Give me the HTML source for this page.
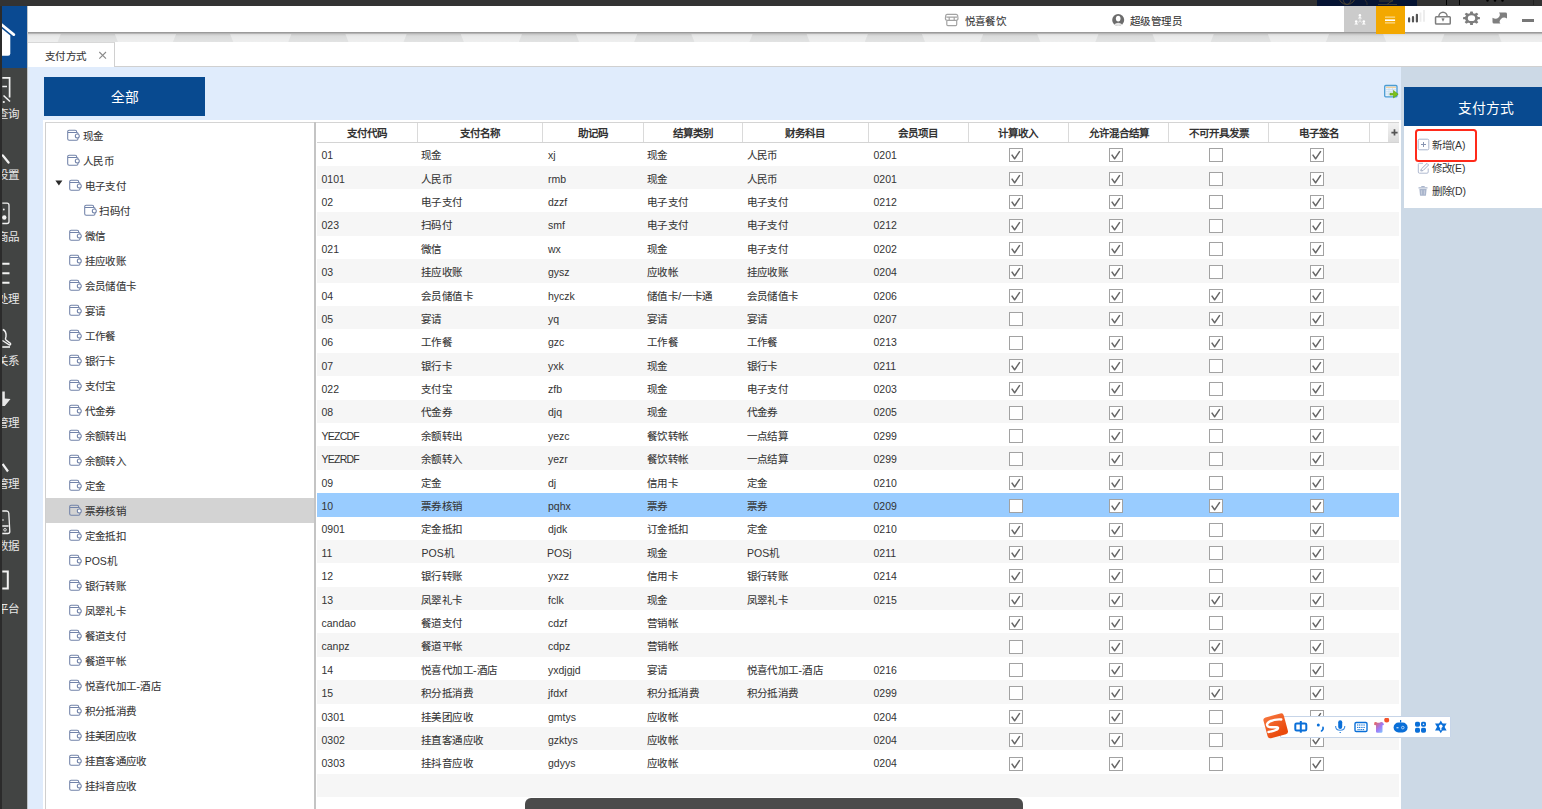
<!DOCTYPE html>
<html lang="zh-CN"><head><meta charset="utf-8"><title>支付方式</title>
<style>
*{margin:0;padding:0;box-sizing:border-box}
html,body{width:1542px;height:809px;overflow:hidden;background:#e0ecfc;font-family:"Liberation Sans",sans-serif;color:#333}
.abs{position:absolute}
.t{position:absolute;font-size:10.5px;line-height:14px;white-space:nowrap}
.z{letter-spacing:0.4px;-webkit-text-stroke:0.1px #444}
.wi{position:absolute}
.cb{position:absolute;width:14px;height:14px;border:1px solid #a2a2a2;background:#fff}
.cb svg{position:absolute;left:-1px;top:-1px}
.row{position:absolute;left:317px;width:1082px}
.hd{position:absolute;font-size:10.5px;font-weight:bold;white-space:nowrap;line-height:14px;text-align:center;color:#333}
.vsep{position:absolute;top:122.5px;width:1px;height:19.5px;background:#dadada}
.sl{position:absolute;font-size:11.5px;line-height:14px;color:#e8e8e8;white-space:nowrap}
</style></head><body>

<div class="abs" style="left:0;top:0;width:1542px;height:6px;background:#333"></div>
<div class="abs" style="left:1317px;top:0;width:100px;height:5.5px;background:#061433"></div>
<svg class="abs" style="left:1317px;top:0" width="100" height="6"><circle cx="30" cy="-4" r="8.5" fill="none" stroke="#4f4630" stroke-width="0.9"/><path d="M26 0 Q27 4.5 30 4.5 Q33 4.5 34 0" fill="none" stroke="#4f4630" stroke-width="0.8"/><path d="M48 0 Q51 3 50 5" fill="none" stroke="#3e3a2e" stroke-width="0.8"/><path d="M61 4.5 H80 M70 4.5 L76 0 M62 1 H76" fill="none" stroke="#4f4630" stroke-width="0.8"/></svg>
<div class="abs" style="left:1445.5px;top:0;width:1px;height:5px;background:#000"></div>
<div class="abs" style="left:1459px;top:0;width:1px;height:5px;background:#000"></div>
<div class="abs" style="left:1532.5px;top:0;width:1px;height:5px;background:#222"></div>
<svg class="abs" style="left:1484px;top:0" width="22" height="4"><circle cx="3.5" cy="0.5" r="1.2" fill="#000"/><circle cx="11" cy="0.5" r="1.2" fill="#000"/><circle cx="18.5" cy="0.5" r="1.2" fill="#000"/></svg>
<div class="abs" style="left:0;top:5.5px;width:28px;height:804px;background:#424443"></div>
<div class="abs" style="left:0;top:5.5px;width:1.7px;height:804px;background:#2b2b2b"></div>
<div class="abs" style="left:1.7px;top:6px;width:25.6px;height:62.2px;background:#0a4a92"></div>
<div class="abs" style="left:27.3px;top:5.5px;width:1px;height:804px;background:#bfc4c8"></div>
<svg class="abs" style="left:1.7px;top:5px" width="26" height="64"><path d="M-3 17.5 L11.8 29.6" stroke="#fff" stroke-width="2.7" stroke-linecap="round"/><path d="M0 23.8 L8.3 30.6 V48.5 Q8.3 50.7 6.1 50.7 H0 Z" fill="#fff"/></svg>
<div class="abs" style="left:1.7px;top:104.5px;width:25.6px;height:18px;overflow:hidden"><span class="sl" style="left:-4.4px;top:2.3px">查询</span></div>
<div class="abs" style="left:1.7px;top:165.8px;width:25.6px;height:18px;overflow:hidden"><span class="sl" style="left:-4.4px;top:2.3px">设置</span></div>
<div class="abs" style="left:1.7px;top:227.5px;width:25.6px;height:18px;overflow:hidden"><span class="sl" style="left:-4.4px;top:2.3px">商品</span></div>
<div class="abs" style="left:1.7px;top:290px;width:25.6px;height:18px;overflow:hidden"><span class="sl" style="left:-4.4px;top:2.3px">处理</span></div>
<div class="abs" style="left:1.7px;top:351.5px;width:25.6px;height:18px;overflow:hidden"><span class="sl" style="left:-4.4px;top:2.3px">关系</span></div>
<div class="abs" style="left:1.7px;top:413.4px;width:25.6px;height:18px;overflow:hidden"><span class="sl" style="left:-4.4px;top:2.3px">管理</span></div>
<div class="abs" style="left:1.7px;top:475px;width:25.6px;height:18px;overflow:hidden"><span class="sl" style="left:-4.4px;top:2.3px">管理</span></div>
<div class="abs" style="left:1.7px;top:536.7px;width:25.6px;height:18px;overflow:hidden"><span class="sl" style="left:-4.4px;top:2.3px">数据</span></div>
<div class="abs" style="left:1.7px;top:599.5px;width:25.6px;height:18px;overflow:hidden"><span class="sl" style="left:-4.4px;top:2.3px">平台</span></div>
<svg class="abs" style="left:1.7px;top:70px" width="25" height="560" viewBox="0 0 25 560"><path d="M0.3 7.8 H7.6 V27.5 M0.3 16.5 H5" fill="none" stroke="#f2f2f2" stroke-width="1.7"/><path d="M1.5 25.5 L8 31.5" stroke="#f2f2f2" stroke-width="1.6"/><circle cx="1.8" cy="32" r="1.1" fill="#f2f2f2"/><path d="M0.8 85.5 L6.5 92.5" stroke="#f2f2f2" stroke-width="2.3" stroke-linecap="round"/><path d="M0.3 133.2 H5 Q7 133.2 7 135.2 V151.5 Q7 153.5 5 153.5 H0.3" fill="none" stroke="#f2f2f2" stroke-width="1.3"/><circle cx="2.3" cy="147.5" r="2.2" fill="#f2f2f2"/><circle cx="1.8" cy="139.5" r="0.9" fill="#f2f2f2"/><path d="M0.3 193.7 H7.5 M0.3 203.3 H7.5 M0.3 212.8 H7.5" stroke="#f2f2f2" stroke-width="2.1"/><path d="M0.8 259.5 Q4.5 261 4 266.5 Q3 269 4 270 L8.5 273.5 Q9 275 7.5 275 L0.5 270.5" fill="none" stroke="#f2f2f2" stroke-width="1.4"/><path d="M0.3 277 H8" stroke="#f2f2f2" stroke-width="1.6"/><path d="M0.3 321.5 H2.8 V328.5 L8.5 329 L2.8 336 H0.3 Z" fill="#e8e8e8"/><path d="M0.6 394 L6 401.5" stroke="#f2f2f2" stroke-width="2.2"/><path d="M0.3 441 H4.5 Q6.5 441 6.8 443 L7.8 461.5 Q7.8 463.5 5.8 463.5 H0.3 M0.3 456 H6.5" fill="none" stroke="#f2f2f2" stroke-width="1.3"/><circle cx="3" cy="459.8" r="1.3" fill="none" stroke="#f2f2f2" stroke-width="0.9"/><circle cx="1" cy="450" r="0.8" fill="#f2f2f2"/><path d="M0.3 501.4 H5.8 V518.5 H0.3" fill="none" stroke="#f2f2f2" stroke-width="2"/></svg>
<div class="abs" style="left:28px;top:5.5px;width:1514px;height:26.5px;background:#fff"></div>
<div class="abs" style="left:28px;top:32px;width:1514px;height:10px;background:linear-gradient(#8e8e8e 0,#a8a8a8 1px,#cfcfcf 2.5px,#e0e1e1 4px,#e8e9e9 10px)"></div>
<svg class="abs" style="left:28px;top:33.5px" width="1514" height="8.5" viewBox="28 0 1514 8.5"><path d="M-54.5 0 H-0.5 L3.5 10 H-58.5 Z" fill="rgba(0,0,0,0.025)"/><path d="M-0.5 0 H60.8 L56.8 10 H3.5 Z" fill="rgba(255,255,255,0.28)"/><path d="M60.8 0 H114.8 L118.8 10 H56.8 Z" fill="rgba(0,0,0,0.025)"/><path d="M114.8 0 H176.1 L172.1 10 H118.8 Z" fill="rgba(255,255,255,0.28)"/><path d="M176.1 0 H230.1 L234.1 10 H172.1 Z" fill="rgba(0,0,0,0.025)"/><path d="M230.1 0 H291.4 L287.4 10 H234.1 Z" fill="rgba(255,255,255,0.28)"/><path d="M291.4 0 H345.4 L349.4 10 H287.4 Z" fill="rgba(0,0,0,0.025)"/><path d="M345.4 0 H406.7 L402.7 10 H349.4 Z" fill="rgba(255,255,255,0.28)"/><path d="M406.7 0 H460.7 L464.7 10 H402.7 Z" fill="rgba(0,0,0,0.025)"/><path d="M460.7 0 H522.0 L518.0 10 H464.7 Z" fill="rgba(255,255,255,0.28)"/><path d="M522.0 0 H576.0 L580.0 10 H518.0 Z" fill="rgba(0,0,0,0.025)"/><path d="M576.0 0 H637.3 L633.3 10 H580.0 Z" fill="rgba(255,255,255,0.28)"/><path d="M637.3 0 H691.3 L695.3 10 H633.3 Z" fill="rgba(0,0,0,0.025)"/><path d="M691.3 0 H752.6 L748.6 10 H695.3 Z" fill="rgba(255,255,255,0.28)"/><path d="M752.6 0 H806.6 L810.6 10 H748.6 Z" fill="rgba(0,0,0,0.025)"/><path d="M806.6 0 H867.9 L863.9 10 H810.6 Z" fill="rgba(255,255,255,0.28)"/><path d="M867.9 0 H921.9 L925.9 10 H863.9 Z" fill="rgba(0,0,0,0.025)"/><path d="M921.9 0 H983.2 L979.2 10 H925.9 Z" fill="rgba(255,255,255,0.28)"/><path d="M983.2 0 H1037.2 L1041.2 10 H979.2 Z" fill="rgba(0,0,0,0.025)"/><path d="M1037.2 0 H1098.5 L1094.5 10 H1041.2 Z" fill="rgba(255,255,255,0.28)"/><path d="M1098.5 0 H1152.5 L1156.5 10 H1094.5 Z" fill="rgba(0,0,0,0.025)"/><path d="M1152.5 0 H1213.8 L1209.8 10 H1156.5 Z" fill="rgba(255,255,255,0.28)"/><path d="M1213.8 0 H1267.8 L1271.8 10 H1209.8 Z" fill="rgba(0,0,0,0.025)"/><path d="M1267.8 0 H1329.1 L1325.1 10 H1271.8 Z" fill="rgba(255,255,255,0.28)"/><path d="M1329.1 0 H1383.1 L1387.1 10 H1325.1 Z" fill="rgba(0,0,0,0.025)"/><path d="M1383.1 0 H1444.4 L1440.4 10 H1387.1 Z" fill="rgba(255,255,255,0.28)"/><path d="M1444.4 0 H1498.4 L1502.4 10 H1440.4 Z" fill="rgba(0,0,0,0.025)"/><path d="M1498.4 0 H1559.7 L1555.7 10 H1502.4 Z" fill="rgba(255,255,255,0.28)"/><path d="M1559.7 0 H1613.7 L1617.7 10 H1555.7 Z" fill="rgba(0,0,0,0.025)"/><path d="M1613.7 0 H1675.0 L1671.0 10 H1617.7 Z" fill="rgba(255,255,255,0.28)"/></svg>
<svg class="abs" style="left:944px;top:12px" width="16" height="16" viewBox="0 0 16 16"><path d="M3 2.3 H12.2 Q13.3 2.3 13.6 3.4 L14 6.2 Q14 8.3 12 8.3 H3.2 Q1.4 8.3 1.4 6.2 L1.8 3.4 Q2 2.3 3 2.3 Z M2.4 5.2 H13 M5.2 5.2 V8.3 M10.2 5.2 V8.3 M2.8 8.3 V12.6 Q2.8 13.7 3.9 13.7 H11.6 Q12.7 13.7 12.7 12.6 V8.3" fill="none" stroke="#a3a3a3" stroke-width="1.2"/></svg>
<span class="t z" style="left:964.5px;top:14px">悦喜餐饮</span>
<svg class="abs" style="left:1111px;top:13px" width="14" height="14" viewBox="0 0 14 14"><circle cx="7.2" cy="6.9" r="6" fill="#6c6c6c"/><ellipse cx="7.2" cy="5.6" rx="2.3" ry="2.9" fill="#fff"/><path d="M3 11.4 Q7.2 8.2 11.4 11.4 Q7.2 14.5 3 11.4 Z" fill="#e6e6e6"/></svg>
<span class="t z" style="left:1130px;top:14px">超级管理员</span>
<div class="abs" style="left:1344.4px;top:5.5px;width:31.8px;height:26.5px;background:#cbcbcb"></div>
<svg class="abs" style="left:1344.4px;top:5.5px" width="32" height="27"><g fill="#fff"><circle cx="15.9" cy="9.4" r="1.3"/><path d="M14 12.4 Q14.3 10.9 15.9 10.9 Q17.5 10.9 17.8 12.4 Z"/><circle cx="12.2" cy="15.6" r="1.3"/><path d="M10.3 18.6 Q10.6 17.1 12.2 17.1 Q13.8 17.1 14.1 18.6 Z"/><circle cx="19.8" cy="15.6" r="1.3"/><path d="M17.9 18.6 Q18.2 17.1 19.8 17.1 Q21.4 17.1 21.7 18.6 Z"/></g><path d="M16 12.7 V15 L14 16.5 M16 15 L18 16.5" stroke="#fff" stroke-width="0.7" fill="none" opacity="0.8"/></svg>
<div class="abs" style="left:1376.2px;top:5.5px;width:28.4px;height:28.3px;background:#f3a800"></div>
<svg class="abs" style="left:1376.2px;top:5.5px" width="29" height="28"><path d="M9 11.2 H19.1 M9 16.8 H19.1" stroke="#fbd98a" stroke-width="1.3"/><path d="M9 14.2 H19.1" stroke="#fff" stroke-width="1.7"/></svg>
<svg class="abs" style="left:1405px;top:8px" width="22" height="16"><path d="M4.1 10.4 V13.5 M8 9.1 V13.5 M11.9 6.8 V13.5" stroke="#555" stroke-width="2.2" stroke-linecap="round"/><path d="M15.5 4.5 V13.7 M19 1.9 V13.7" stroke="#ececec" stroke-width="1.8"/></svg>
<svg class="abs" style="left:1433px;top:10px" width="20" height="17" viewBox="0 0 20 17"><rect x="2.55" y="6.75" width="14.7" height="7.3" rx="0.8" fill="none" stroke="#7d7d7d" stroke-width="1.5"/><path d="M5.8 6.75 A4.2 4.5 0 0 1 14.2 6.75" fill="none" stroke="#7d7d7d" stroke-width="1.5"/><path d="M8.4 8.6 Q10 8 11.6 8.6 L10 11.8 Z" fill="#7d7d7d"/></svg>
<svg class="abs" style="left:1461px;top:10px" width="21" height="16" viewBox="0 0 21 16"><g transform="translate(10.5,8.15) scale(1.25,1)"><circle r="4.1" fill="none" stroke="#7d7d7d" stroke-width="2.3"/><rect x="-1.15" y="-6.75" width="2.3" height="3" rx="0.5" fill="#7d7d7d" transform="rotate(0)"/><rect x="-1.15" y="-6.75" width="2.3" height="3" rx="0.5" fill="#7d7d7d" transform="rotate(45)"/><rect x="-1.15" y="-6.75" width="2.3" height="3" rx="0.5" fill="#7d7d7d" transform="rotate(90)"/><rect x="-1.15" y="-6.75" width="2.3" height="3" rx="0.5" fill="#7d7d7d" transform="rotate(135)"/><rect x="-1.15" y="-6.75" width="2.3" height="3" rx="0.5" fill="#7d7d7d" transform="rotate(180)"/><rect x="-1.15" y="-6.75" width="2.3" height="3" rx="0.5" fill="#7d7d7d" transform="rotate(225)"/><rect x="-1.15" y="-6.75" width="2.3" height="3" rx="0.5" fill="#7d7d7d" transform="rotate(270)"/><rect x="-1.15" y="-6.75" width="2.3" height="3" rx="0.5" fill="#7d7d7d" transform="rotate(315)"/></g></svg>
<svg class="abs" style="left:1490px;top:10px" width="20" height="16" viewBox="0 0 20 16"><path d="M9 2.55 H15.5 Q17 2.55 17 4 V8.5 Q13.5 6.5 11 9 Q8.5 11.5 10.4 13.6 H4 Q2.5 13.6 2.5 12.1 V7.8 Q6 10 8.5 7.5 Q11 5 9 2.55 Z" fill="#7f7f7f"/></svg>
<div class="abs" style="left:1522px;top:19px;width:12.3px;height:3px;background:#777"></div>
<div class="abs" style="left:28px;top:41.5px;width:1514px;height:25.5px;background:#fff;border-bottom:1px solid #d0d0d0"></div>
<div class="abs" style="left:28px;top:42.2px;width:87px;height:25px;background:#fff;border-top:1px solid #d8d8d8;border-right:1px solid #d0d0d0"></div>
<span class="t z" style="left:44.8px;top:49.3px">支付方式</span>
<svg class="abs" style="left:98px;top:51px" width="10" height="9"><path d="M1.3 1 L8 7.6 M8 1 L1.3 7.6" stroke="#8a8a8a" stroke-width="1.1"/></svg>
<div class="abs" style="left:44px;top:77px;width:161px;height:39px;background:#084a90"></div>
<span class="t" style="left:110.5px;top:90px;font-size:13.8px;color:#fff;line-height:16px">全部</span>
<svg class="abs" style="left:1383px;top:84px" width="17" height="15" viewBox="0 0 17 15"><rect x="1.7" y="1.5" width="12.3" height="11.3" rx="1" fill="#eaf2fa" stroke="#4a9cd3" stroke-width="1.3"/><path d="M3 3.3 H13" stroke="#f3c47a" stroke-width="0.9"/><path d="M3 5.5 H13 M3 7.7 H9 M3 10 H9 M6 4 V12 M9.5 4 V8" stroke="#bcd6ee" stroke-width="0.6"/><path d="M7 9.3 L10.5 9.3 L10.5 6.5 L15.2 10.2 L10.5 13.9 L10.5 11.1 L7 11.1 Z" fill="#7cc219" stroke="#5aa010" stroke-width="0.6"/></svg>
<div class="abs" style="left:43.2px;top:120px;width:1358px;height:700px;background:#fff"></div>
<div class="abs" style="left:45.3px;top:121.9px;width:1.2px;height:700px;background:#cfcfcf"></div>
<div class="abs" style="left:45.3px;top:121.9px;width:1353.5px;height:1px;background:#d4d4d4"></div>
<div class="abs" style="left:314.3px;top:122px;width:2.2px;height:700px;background:#c4c4c4"></div>
<svg class="wi" style="left:64.40px;top:125.50px" width="20" height="18" viewBox="0 0 20 18"><path d="M3.7 6.45 V12.7 Q3.7 14.2 5.2 14.2 H12.5 Q14 14.2 14 12.7 V11.9 M14 7.9 V7.6 Q14 6.45 13 6.45 H3.7 V5.6 Q3.7 4.2 5.1 4.2 H11.2 Q12.6 4.2 12.6 5.6 V6.45" fill="none" stroke="#7283a9" stroke-width="1.05"/><circle cx="13.3" cy="9.9" r="2" fill="#fff" stroke="#7283a9" stroke-width="1.05"/></svg>
<span class="t z" style="left:83.1px;top:129.2px">现金</span>
<svg class="wi" style="left:64.40px;top:150.50px" width="20" height="18" viewBox="0 0 20 18"><path d="M3.7 6.45 V12.7 Q3.7 14.2 5.2 14.2 H12.5 Q14 14.2 14 12.7 V11.9 M14 7.9 V7.6 Q14 6.45 13 6.45 H3.7 V5.6 Q3.7 4.2 5.1 4.2 H11.2 Q12.6 4.2 12.6 5.6 V6.45" fill="none" stroke="#7283a9" stroke-width="1.05"/><circle cx="13.3" cy="9.9" r="2" fill="#fff" stroke="#7283a9" stroke-width="1.05"/></svg>
<span class="t z" style="left:83.1px;top:154.2px">人民币</span>
<svg class="wi" style="left:65.60px;top:175.50px" width="20" height="18" viewBox="0 0 20 18"><path d="M3.7 6.45 V12.7 Q3.7 14.2 5.2 14.2 H12.5 Q14 14.2 14 12.7 V11.9 M14 7.9 V7.6 Q14 6.45 13 6.45 H3.7 V5.6 Q3.7 4.2 5.1 4.2 H11.2 Q12.6 4.2 12.6 5.6 V6.45" fill="none" stroke="#7283a9" stroke-width="1.05"/><circle cx="13.3" cy="9.9" r="2" fill="#fff" stroke="#7283a9" stroke-width="1.05"/></svg>
<span class="t z" style="left:84.5px;top:179.2px">电子支付</span>
<svg class="wi" style="left:81.00px;top:200.50px" width="20" height="18" viewBox="0 0 20 18"><path d="M3.7 6.45 V12.7 Q3.7 14.2 5.2 14.2 H12.5 Q14 14.2 14 12.7 V11.9 M14 7.9 V7.6 Q14 6.45 13 6.45 H3.7 V5.6 Q3.7 4.2 5.1 4.2 H11.2 Q12.6 4.2 12.6 5.6 V6.45" fill="none" stroke="#7283a9" stroke-width="1.05"/><circle cx="13.3" cy="9.9" r="2" fill="#fff" stroke="#7283a9" stroke-width="1.05"/></svg>
<span class="t z" style="left:99.39999999999999px;top:204.2px">扫码付</span>
<svg class="wi" style="left:65.60px;top:225.50px" width="20" height="18" viewBox="0 0 20 18"><path d="M3.7 6.45 V12.7 Q3.7 14.2 5.2 14.2 H12.5 Q14 14.2 14 12.7 V11.9 M14 7.9 V7.6 Q14 6.45 13 6.45 H3.7 V5.6 Q3.7 4.2 5.1 4.2 H11.2 Q12.6 4.2 12.6 5.6 V6.45" fill="none" stroke="#7283a9" stroke-width="1.05"/><circle cx="13.3" cy="9.9" r="2" fill="#fff" stroke="#7283a9" stroke-width="1.05"/></svg>
<span class="t z" style="left:84.5px;top:229.2px">微信</span>
<svg class="wi" style="left:65.60px;top:250.50px" width="20" height="18" viewBox="0 0 20 18"><path d="M3.7 6.45 V12.7 Q3.7 14.2 5.2 14.2 H12.5 Q14 14.2 14 12.7 V11.9 M14 7.9 V7.6 Q14 6.45 13 6.45 H3.7 V5.6 Q3.7 4.2 5.1 4.2 H11.2 Q12.6 4.2 12.6 5.6 V6.45" fill="none" stroke="#7283a9" stroke-width="1.05"/><circle cx="13.3" cy="9.9" r="2" fill="#fff" stroke="#7283a9" stroke-width="1.05"/></svg>
<span class="t z" style="left:84.5px;top:254.2px">挂应收账</span>
<svg class="wi" style="left:65.60px;top:275.50px" width="20" height="18" viewBox="0 0 20 18"><path d="M3.7 6.45 V12.7 Q3.7 14.2 5.2 14.2 H12.5 Q14 14.2 14 12.7 V11.9 M14 7.9 V7.6 Q14 6.45 13 6.45 H3.7 V5.6 Q3.7 4.2 5.1 4.2 H11.2 Q12.6 4.2 12.6 5.6 V6.45" fill="none" stroke="#7283a9" stroke-width="1.05"/><circle cx="13.3" cy="9.9" r="2" fill="#fff" stroke="#7283a9" stroke-width="1.05"/></svg>
<span class="t z" style="left:84.5px;top:279.2px">会员储值卡</span>
<svg class="wi" style="left:65.60px;top:300.50px" width="20" height="18" viewBox="0 0 20 18"><path d="M3.7 6.45 V12.7 Q3.7 14.2 5.2 14.2 H12.5 Q14 14.2 14 12.7 V11.9 M14 7.9 V7.6 Q14 6.45 13 6.45 H3.7 V5.6 Q3.7 4.2 5.1 4.2 H11.2 Q12.6 4.2 12.6 5.6 V6.45" fill="none" stroke="#7283a9" stroke-width="1.05"/><circle cx="13.3" cy="9.9" r="2" fill="#fff" stroke="#7283a9" stroke-width="1.05"/></svg>
<span class="t z" style="left:84.5px;top:304.2px">宴请</span>
<svg class="wi" style="left:65.60px;top:325.50px" width="20" height="18" viewBox="0 0 20 18"><path d="M3.7 6.45 V12.7 Q3.7 14.2 5.2 14.2 H12.5 Q14 14.2 14 12.7 V11.9 M14 7.9 V7.6 Q14 6.45 13 6.45 H3.7 V5.6 Q3.7 4.2 5.1 4.2 H11.2 Q12.6 4.2 12.6 5.6 V6.45" fill="none" stroke="#7283a9" stroke-width="1.05"/><circle cx="13.3" cy="9.9" r="2" fill="#fff" stroke="#7283a9" stroke-width="1.05"/></svg>
<span class="t z" style="left:84.5px;top:329.2px">工作餐</span>
<svg class="wi" style="left:65.60px;top:350.50px" width="20" height="18" viewBox="0 0 20 18"><path d="M3.7 6.45 V12.7 Q3.7 14.2 5.2 14.2 H12.5 Q14 14.2 14 12.7 V11.9 M14 7.9 V7.6 Q14 6.45 13 6.45 H3.7 V5.6 Q3.7 4.2 5.1 4.2 H11.2 Q12.6 4.2 12.6 5.6 V6.45" fill="none" stroke="#7283a9" stroke-width="1.05"/><circle cx="13.3" cy="9.9" r="2" fill="#fff" stroke="#7283a9" stroke-width="1.05"/></svg>
<span class="t z" style="left:84.5px;top:354.2px">银行卡</span>
<svg class="wi" style="left:65.60px;top:375.50px" width="20" height="18" viewBox="0 0 20 18"><path d="M3.7 6.45 V12.7 Q3.7 14.2 5.2 14.2 H12.5 Q14 14.2 14 12.7 V11.9 M14 7.9 V7.6 Q14 6.45 13 6.45 H3.7 V5.6 Q3.7 4.2 5.1 4.2 H11.2 Q12.6 4.2 12.6 5.6 V6.45" fill="none" stroke="#7283a9" stroke-width="1.05"/><circle cx="13.3" cy="9.9" r="2" fill="#fff" stroke="#7283a9" stroke-width="1.05"/></svg>
<span class="t z" style="left:84.5px;top:379.2px">支付宝</span>
<svg class="wi" style="left:65.60px;top:400.50px" width="20" height="18" viewBox="0 0 20 18"><path d="M3.7 6.45 V12.7 Q3.7 14.2 5.2 14.2 H12.5 Q14 14.2 14 12.7 V11.9 M14 7.9 V7.6 Q14 6.45 13 6.45 H3.7 V5.6 Q3.7 4.2 5.1 4.2 H11.2 Q12.6 4.2 12.6 5.6 V6.45" fill="none" stroke="#7283a9" stroke-width="1.05"/><circle cx="13.3" cy="9.9" r="2" fill="#fff" stroke="#7283a9" stroke-width="1.05"/></svg>
<span class="t z" style="left:84.5px;top:404.2px">代金券</span>
<svg class="wi" style="left:65.60px;top:425.50px" width="20" height="18" viewBox="0 0 20 18"><path d="M3.7 6.45 V12.7 Q3.7 14.2 5.2 14.2 H12.5 Q14 14.2 14 12.7 V11.9 M14 7.9 V7.6 Q14 6.45 13 6.45 H3.7 V5.6 Q3.7 4.2 5.1 4.2 H11.2 Q12.6 4.2 12.6 5.6 V6.45" fill="none" stroke="#7283a9" stroke-width="1.05"/><circle cx="13.3" cy="9.9" r="2" fill="#fff" stroke="#7283a9" stroke-width="1.05"/></svg>
<span class="t z" style="left:84.5px;top:429.2px">余额转出</span>
<svg class="wi" style="left:65.60px;top:450.50px" width="20" height="18" viewBox="0 0 20 18"><path d="M3.7 6.45 V12.7 Q3.7 14.2 5.2 14.2 H12.5 Q14 14.2 14 12.7 V11.9 M14 7.9 V7.6 Q14 6.45 13 6.45 H3.7 V5.6 Q3.7 4.2 5.1 4.2 H11.2 Q12.6 4.2 12.6 5.6 V6.45" fill="none" stroke="#7283a9" stroke-width="1.05"/><circle cx="13.3" cy="9.9" r="2" fill="#fff" stroke="#7283a9" stroke-width="1.05"/></svg>
<span class="t z" style="left:84.5px;top:454.2px">余额转入</span>
<svg class="wi" style="left:65.60px;top:475.50px" width="20" height="18" viewBox="0 0 20 18"><path d="M3.7 6.45 V12.7 Q3.7 14.2 5.2 14.2 H12.5 Q14 14.2 14 12.7 V11.9 M14 7.9 V7.6 Q14 6.45 13 6.45 H3.7 V5.6 Q3.7 4.2 5.1 4.2 H11.2 Q12.6 4.2 12.6 5.6 V6.45" fill="none" stroke="#7283a9" stroke-width="1.05"/><circle cx="13.3" cy="9.9" r="2" fill="#fff" stroke="#7283a9" stroke-width="1.05"/></svg>
<span class="t z" style="left:84.5px;top:479.2px">定金</span>
<div class="abs" style="left:46px;top:498.1px;width:267.9px;height:24.8px;background:#d3d3d3"></div>
<svg class="wi" style="left:65.60px;top:500.50px" width="20" height="18" viewBox="0 0 20 18"><path d="M3.7 6.45 V12.7 Q3.7 14.2 5.2 14.2 H12.5 Q14 14.2 14 12.7 V11.9 M14 7.9 V7.6 Q14 6.45 13 6.45 H3.7 V5.6 Q3.7 4.2 5.1 4.2 H11.2 Q12.6 4.2 12.6 5.6 V6.45" fill="none" stroke="#7283a9" stroke-width="1.05"/><circle cx="13.3" cy="9.9" r="2" fill="#fff" stroke="#7283a9" stroke-width="1.05"/></svg>
<span class="t z" style="left:84.5px;top:504.2px">票券核销</span>
<svg class="wi" style="left:65.60px;top:525.50px" width="20" height="18" viewBox="0 0 20 18"><path d="M3.7 6.45 V12.7 Q3.7 14.2 5.2 14.2 H12.5 Q14 14.2 14 12.7 V11.9 M14 7.9 V7.6 Q14 6.45 13 6.45 H3.7 V5.6 Q3.7 4.2 5.1 4.2 H11.2 Q12.6 4.2 12.6 5.6 V6.45" fill="none" stroke="#7283a9" stroke-width="1.05"/><circle cx="13.3" cy="9.9" r="2" fill="#fff" stroke="#7283a9" stroke-width="1.05"/></svg>
<span class="t z" style="left:84.5px;top:529.2px">定金抵扣</span>
<svg class="wi" style="left:65.60px;top:550.50px" width="20" height="18" viewBox="0 0 20 18"><path d="M3.7 6.45 V12.7 Q3.7 14.2 5.2 14.2 H12.5 Q14 14.2 14 12.7 V11.9 M14 7.9 V7.6 Q14 6.45 13 6.45 H3.7 V5.6 Q3.7 4.2 5.1 4.2 H11.2 Q12.6 4.2 12.6 5.6 V6.45" fill="none" stroke="#7283a9" stroke-width="1.05"/><circle cx="13.3" cy="9.9" r="2" fill="#fff" stroke="#7283a9" stroke-width="1.05"/></svg>
<span class="t" style="left:84.7px;top:554.2px">POS机</span>
<svg class="wi" style="left:65.60px;top:575.50px" width="20" height="18" viewBox="0 0 20 18"><path d="M3.7 6.45 V12.7 Q3.7 14.2 5.2 14.2 H12.5 Q14 14.2 14 12.7 V11.9 M14 7.9 V7.6 Q14 6.45 13 6.45 H3.7 V5.6 Q3.7 4.2 5.1 4.2 H11.2 Q12.6 4.2 12.6 5.6 V6.45" fill="none" stroke="#7283a9" stroke-width="1.05"/><circle cx="13.3" cy="9.9" r="2" fill="#fff" stroke="#7283a9" stroke-width="1.05"/></svg>
<span class="t z" style="left:84.5px;top:579.2px">银行转账</span>
<svg class="wi" style="left:65.60px;top:600.50px" width="20" height="18" viewBox="0 0 20 18"><path d="M3.7 6.45 V12.7 Q3.7 14.2 5.2 14.2 H12.5 Q14 14.2 14 12.7 V11.9 M14 7.9 V7.6 Q14 6.45 13 6.45 H3.7 V5.6 Q3.7 4.2 5.1 4.2 H11.2 Q12.6 4.2 12.6 5.6 V6.45" fill="none" stroke="#7283a9" stroke-width="1.05"/><circle cx="13.3" cy="9.9" r="2" fill="#fff" stroke="#7283a9" stroke-width="1.05"/></svg>
<span class="t z" style="left:84.5px;top:604.2px">凤翠礼卡</span>
<svg class="wi" style="left:65.60px;top:625.50px" width="20" height="18" viewBox="0 0 20 18"><path d="M3.7 6.45 V12.7 Q3.7 14.2 5.2 14.2 H12.5 Q14 14.2 14 12.7 V11.9 M14 7.9 V7.6 Q14 6.45 13 6.45 H3.7 V5.6 Q3.7 4.2 5.1 4.2 H11.2 Q12.6 4.2 12.6 5.6 V6.45" fill="none" stroke="#7283a9" stroke-width="1.05"/><circle cx="13.3" cy="9.9" r="2" fill="#fff" stroke="#7283a9" stroke-width="1.05"/></svg>
<span class="t z" style="left:84.5px;top:629.2px">餐道支付</span>
<svg class="wi" style="left:65.60px;top:650.50px" width="20" height="18" viewBox="0 0 20 18"><path d="M3.7 6.45 V12.7 Q3.7 14.2 5.2 14.2 H12.5 Q14 14.2 14 12.7 V11.9 M14 7.9 V7.6 Q14 6.45 13 6.45 H3.7 V5.6 Q3.7 4.2 5.1 4.2 H11.2 Q12.6 4.2 12.6 5.6 V6.45" fill="none" stroke="#7283a9" stroke-width="1.05"/><circle cx="13.3" cy="9.9" r="2" fill="#fff" stroke="#7283a9" stroke-width="1.05"/></svg>
<span class="t z" style="left:84.5px;top:654.2px">餐道平帐</span>
<svg class="wi" style="left:65.60px;top:675.50px" width="20" height="18" viewBox="0 0 20 18"><path d="M3.7 6.45 V12.7 Q3.7 14.2 5.2 14.2 H12.5 Q14 14.2 14 12.7 V11.9 M14 7.9 V7.6 Q14 6.45 13 6.45 H3.7 V5.6 Q3.7 4.2 5.1 4.2 H11.2 Q12.6 4.2 12.6 5.6 V6.45" fill="none" stroke="#7283a9" stroke-width="1.05"/><circle cx="13.3" cy="9.9" r="2" fill="#fff" stroke="#7283a9" stroke-width="1.05"/></svg>
<span class="t z" style="left:84.5px;top:679.2px">悦喜代加工-酒店</span>
<svg class="wi" style="left:65.60px;top:700.50px" width="20" height="18" viewBox="0 0 20 18"><path d="M3.7 6.45 V12.7 Q3.7 14.2 5.2 14.2 H12.5 Q14 14.2 14 12.7 V11.9 M14 7.9 V7.6 Q14 6.45 13 6.45 H3.7 V5.6 Q3.7 4.2 5.1 4.2 H11.2 Q12.6 4.2 12.6 5.6 V6.45" fill="none" stroke="#7283a9" stroke-width="1.05"/><circle cx="13.3" cy="9.9" r="2" fill="#fff" stroke="#7283a9" stroke-width="1.05"/></svg>
<span class="t z" style="left:84.5px;top:704.2px">积分抵消费</span>
<svg class="wi" style="left:65.60px;top:725.50px" width="20" height="18" viewBox="0 0 20 18"><path d="M3.7 6.45 V12.7 Q3.7 14.2 5.2 14.2 H12.5 Q14 14.2 14 12.7 V11.9 M14 7.9 V7.6 Q14 6.45 13 6.45 H3.7 V5.6 Q3.7 4.2 5.1 4.2 H11.2 Q12.6 4.2 12.6 5.6 V6.45" fill="none" stroke="#7283a9" stroke-width="1.05"/><circle cx="13.3" cy="9.9" r="2" fill="#fff" stroke="#7283a9" stroke-width="1.05"/></svg>
<span class="t z" style="left:84.5px;top:729.2px">挂美团应收</span>
<svg class="wi" style="left:65.60px;top:750.50px" width="20" height="18" viewBox="0 0 20 18"><path d="M3.7 6.45 V12.7 Q3.7 14.2 5.2 14.2 H12.5 Q14 14.2 14 12.7 V11.9 M14 7.9 V7.6 Q14 6.45 13 6.45 H3.7 V5.6 Q3.7 4.2 5.1 4.2 H11.2 Q12.6 4.2 12.6 5.6 V6.45" fill="none" stroke="#7283a9" stroke-width="1.05"/><circle cx="13.3" cy="9.9" r="2" fill="#fff" stroke="#7283a9" stroke-width="1.05"/></svg>
<span class="t z" style="left:84.5px;top:754.2px">挂直客通应收</span>
<svg class="wi" style="left:65.60px;top:775.50px" width="20" height="18" viewBox="0 0 20 18"><path d="M3.7 6.45 V12.7 Q3.7 14.2 5.2 14.2 H12.5 Q14 14.2 14 12.7 V11.9 M14 7.9 V7.6 Q14 6.45 13 6.45 H3.7 V5.6 Q3.7 4.2 5.1 4.2 H11.2 Q12.6 4.2 12.6 5.6 V6.45" fill="none" stroke="#7283a9" stroke-width="1.05"/><circle cx="13.3" cy="9.9" r="2" fill="#fff" stroke="#7283a9" stroke-width="1.05"/></svg>
<span class="t z" style="left:84.5px;top:779.2px">挂抖音应收</span>
<svg class="abs" style="left:55px;top:179.5px" width="8" height="6" viewBox="0 0 8 6"><path d="M0.4 0.4 H7.4 L3.9 5.6 Z" fill="#2a2a2a"/></svg>
<div class="row" style="top:142.30px;height:23.39px;background:#fff"></div>
<span class="t" style="left:321.50px;top:148.20px">01</span>
<span class="t z" style="left:421.10px;top:148.20px">现金</span>
<span class="t" style="left:548.00px;top:148.20px">xj</span>
<span class="t z" style="left:647.10px;top:148.20px">现金</span>
<span class="t z" style="left:746.60px;top:148.20px">人民币</span>
<span class="t" style="left:873.50px;top:148.20px">0201</span>
<div class="cb" style="left:1009.15px;top:148.40px"><svg width="14" height="14" viewBox="0 0 14 14"><path d="M2.7 6.6 L5.6 10.8 L10.8 3.2" fill="none" stroke="#666" stroke-width="1.5" stroke-linejoin="round"/></svg></div>
<div class="cb" style="left:1109.40px;top:148.40px"><svg width="14" height="14" viewBox="0 0 14 14"><path d="M2.7 6.6 L5.6 10.8 L10.8 3.2" fill="none" stroke="#666" stroke-width="1.5" stroke-linejoin="round"/></svg></div>
<div class="cb" style="left:1209.45px;top:148.40px"></div>
<div class="cb" style="left:1309.80px;top:148.40px"><svg width="14" height="14" viewBox="0 0 14 14"><path d="M2.7 6.6 L5.6 10.8 L10.8 3.2" fill="none" stroke="#666" stroke-width="1.5" stroke-linejoin="round"/></svg></div>
<div class="row" style="top:165.69px;height:23.39px;background:#f6f6f6"></div>
<span class="t" style="left:321.50px;top:171.59px">0101</span>
<span class="t z" style="left:421.10px;top:171.59px">人民币</span>
<span class="t" style="left:548.00px;top:171.59px">rmb</span>
<span class="t z" style="left:647.10px;top:171.59px">现金</span>
<span class="t z" style="left:746.60px;top:171.59px">人民币</span>
<span class="t" style="left:873.50px;top:171.59px">0201</span>
<div class="cb" style="left:1009.15px;top:171.79px"><svg width="14" height="14" viewBox="0 0 14 14"><path d="M2.7 6.6 L5.6 10.8 L10.8 3.2" fill="none" stroke="#666" stroke-width="1.5" stroke-linejoin="round"/></svg></div>
<div class="cb" style="left:1109.40px;top:171.79px"><svg width="14" height="14" viewBox="0 0 14 14"><path d="M2.7 6.6 L5.6 10.8 L10.8 3.2" fill="none" stroke="#666" stroke-width="1.5" stroke-linejoin="round"/></svg></div>
<div class="cb" style="left:1209.45px;top:171.79px"></div>
<div class="cb" style="left:1309.80px;top:171.79px"><svg width="14" height="14" viewBox="0 0 14 14"><path d="M2.7 6.6 L5.6 10.8 L10.8 3.2" fill="none" stroke="#666" stroke-width="1.5" stroke-linejoin="round"/></svg></div>
<div class="row" style="top:189.08px;height:23.39px;background:#fff"></div>
<span class="t" style="left:321.50px;top:194.98px">02</span>
<span class="t z" style="left:421.10px;top:194.98px">电子支付</span>
<span class="t" style="left:548.00px;top:194.98px">dzzf</span>
<span class="t z" style="left:647.10px;top:194.98px">电子支付</span>
<span class="t z" style="left:746.60px;top:194.98px">电子支付</span>
<span class="t" style="left:873.50px;top:194.98px">0212</span>
<div class="cb" style="left:1009.15px;top:195.18px"><svg width="14" height="14" viewBox="0 0 14 14"><path d="M2.7 6.6 L5.6 10.8 L10.8 3.2" fill="none" stroke="#666" stroke-width="1.5" stroke-linejoin="round"/></svg></div>
<div class="cb" style="left:1109.40px;top:195.18px"><svg width="14" height="14" viewBox="0 0 14 14"><path d="M2.7 6.6 L5.6 10.8 L10.8 3.2" fill="none" stroke="#666" stroke-width="1.5" stroke-linejoin="round"/></svg></div>
<div class="cb" style="left:1209.45px;top:195.18px"></div>
<div class="cb" style="left:1309.80px;top:195.18px"><svg width="14" height="14" viewBox="0 0 14 14"><path d="M2.7 6.6 L5.6 10.8 L10.8 3.2" fill="none" stroke="#666" stroke-width="1.5" stroke-linejoin="round"/></svg></div>
<div class="row" style="top:212.47px;height:23.39px;background:#f6f6f6"></div>
<span class="t" style="left:321.50px;top:218.37px">023</span>
<span class="t z" style="left:421.10px;top:218.37px">扫码付</span>
<span class="t" style="left:548.00px;top:218.37px">smf</span>
<span class="t z" style="left:647.10px;top:218.37px">电子支付</span>
<span class="t z" style="left:746.60px;top:218.37px">电子支付</span>
<span class="t" style="left:873.50px;top:218.37px">0212</span>
<div class="cb" style="left:1009.15px;top:218.57px"><svg width="14" height="14" viewBox="0 0 14 14"><path d="M2.7 6.6 L5.6 10.8 L10.8 3.2" fill="none" stroke="#666" stroke-width="1.5" stroke-linejoin="round"/></svg></div>
<div class="cb" style="left:1109.40px;top:218.57px"><svg width="14" height="14" viewBox="0 0 14 14"><path d="M2.7 6.6 L5.6 10.8 L10.8 3.2" fill="none" stroke="#666" stroke-width="1.5" stroke-linejoin="round"/></svg></div>
<div class="cb" style="left:1209.45px;top:218.57px"></div>
<div class="cb" style="left:1309.80px;top:218.57px"><svg width="14" height="14" viewBox="0 0 14 14"><path d="M2.7 6.6 L5.6 10.8 L10.8 3.2" fill="none" stroke="#666" stroke-width="1.5" stroke-linejoin="round"/></svg></div>
<div class="row" style="top:235.86px;height:23.39px;background:#fff"></div>
<span class="t" style="left:321.50px;top:241.76px">021</span>
<span class="t z" style="left:421.10px;top:241.76px">微信</span>
<span class="t" style="left:548.00px;top:241.76px">wx</span>
<span class="t z" style="left:647.10px;top:241.76px">现金</span>
<span class="t z" style="left:746.60px;top:241.76px">电子支付</span>
<span class="t" style="left:873.50px;top:241.76px">0202</span>
<div class="cb" style="left:1009.15px;top:241.96px"><svg width="14" height="14" viewBox="0 0 14 14"><path d="M2.7 6.6 L5.6 10.8 L10.8 3.2" fill="none" stroke="#666" stroke-width="1.5" stroke-linejoin="round"/></svg></div>
<div class="cb" style="left:1109.40px;top:241.96px"><svg width="14" height="14" viewBox="0 0 14 14"><path d="M2.7 6.6 L5.6 10.8 L10.8 3.2" fill="none" stroke="#666" stroke-width="1.5" stroke-linejoin="round"/></svg></div>
<div class="cb" style="left:1209.45px;top:241.96px"></div>
<div class="cb" style="left:1309.80px;top:241.96px"><svg width="14" height="14" viewBox="0 0 14 14"><path d="M2.7 6.6 L5.6 10.8 L10.8 3.2" fill="none" stroke="#666" stroke-width="1.5" stroke-linejoin="round"/></svg></div>
<div class="row" style="top:259.25px;height:23.39px;background:#f6f6f6"></div>
<span class="t" style="left:321.50px;top:265.15px">03</span>
<span class="t z" style="left:421.10px;top:265.15px">挂应收账</span>
<span class="t" style="left:548.00px;top:265.15px">gysz</span>
<span class="t z" style="left:647.10px;top:265.15px">应收帐</span>
<span class="t z" style="left:746.60px;top:265.15px">挂应收账</span>
<span class="t" style="left:873.50px;top:265.15px">0204</span>
<div class="cb" style="left:1009.15px;top:265.35px"><svg width="14" height="14" viewBox="0 0 14 14"><path d="M2.7 6.6 L5.6 10.8 L10.8 3.2" fill="none" stroke="#666" stroke-width="1.5" stroke-linejoin="round"/></svg></div>
<div class="cb" style="left:1109.40px;top:265.35px"><svg width="14" height="14" viewBox="0 0 14 14"><path d="M2.7 6.6 L5.6 10.8 L10.8 3.2" fill="none" stroke="#666" stroke-width="1.5" stroke-linejoin="round"/></svg></div>
<div class="cb" style="left:1209.45px;top:265.35px"></div>
<div class="cb" style="left:1309.80px;top:265.35px"><svg width="14" height="14" viewBox="0 0 14 14"><path d="M2.7 6.6 L5.6 10.8 L10.8 3.2" fill="none" stroke="#666" stroke-width="1.5" stroke-linejoin="round"/></svg></div>
<div class="row" style="top:282.64px;height:23.39px;background:#fff"></div>
<span class="t" style="left:321.50px;top:288.54px">04</span>
<span class="t z" style="left:421.10px;top:288.54px">会员储值卡</span>
<span class="t" style="left:548.00px;top:288.54px">hyczk</span>
<span class="t z" style="left:647.10px;top:288.54px">储值卡/一卡通</span>
<span class="t z" style="left:746.60px;top:288.54px">会员储值卡</span>
<span class="t" style="left:873.50px;top:288.54px">0206</span>
<div class="cb" style="left:1009.15px;top:288.74px"><svg width="14" height="14" viewBox="0 0 14 14"><path d="M2.7 6.6 L5.6 10.8 L10.8 3.2" fill="none" stroke="#666" stroke-width="1.5" stroke-linejoin="round"/></svg></div>
<div class="cb" style="left:1109.40px;top:288.74px"><svg width="14" height="14" viewBox="0 0 14 14"><path d="M2.7 6.6 L5.6 10.8 L10.8 3.2" fill="none" stroke="#666" stroke-width="1.5" stroke-linejoin="round"/></svg></div>
<div class="cb" style="left:1209.45px;top:288.74px"><svg width="14" height="14" viewBox="0 0 14 14"><path d="M2.7 6.6 L5.6 10.8 L10.8 3.2" fill="none" stroke="#666" stroke-width="1.5" stroke-linejoin="round"/></svg></div>
<div class="cb" style="left:1309.80px;top:288.74px"><svg width="14" height="14" viewBox="0 0 14 14"><path d="M2.7 6.6 L5.6 10.8 L10.8 3.2" fill="none" stroke="#666" stroke-width="1.5" stroke-linejoin="round"/></svg></div>
<div class="row" style="top:306.03px;height:23.39px;background:#f6f6f6"></div>
<span class="t" style="left:321.50px;top:311.93px">05</span>
<span class="t z" style="left:421.10px;top:311.93px">宴请</span>
<span class="t" style="left:548.00px;top:311.93px">yq</span>
<span class="t z" style="left:647.10px;top:311.93px">宴请</span>
<span class="t z" style="left:746.60px;top:311.93px">宴请</span>
<span class="t" style="left:873.50px;top:311.93px">0207</span>
<div class="cb" style="left:1009.15px;top:312.13px"></div>
<div class="cb" style="left:1109.40px;top:312.13px"><svg width="14" height="14" viewBox="0 0 14 14"><path d="M2.7 6.6 L5.6 10.8 L10.8 3.2" fill="none" stroke="#666" stroke-width="1.5" stroke-linejoin="round"/></svg></div>
<div class="cb" style="left:1209.45px;top:312.13px"><svg width="14" height="14" viewBox="0 0 14 14"><path d="M2.7 6.6 L5.6 10.8 L10.8 3.2" fill="none" stroke="#666" stroke-width="1.5" stroke-linejoin="round"/></svg></div>
<div class="cb" style="left:1309.80px;top:312.13px"><svg width="14" height="14" viewBox="0 0 14 14"><path d="M2.7 6.6 L5.6 10.8 L10.8 3.2" fill="none" stroke="#666" stroke-width="1.5" stroke-linejoin="round"/></svg></div>
<div class="row" style="top:329.42px;height:23.39px;background:#fff"></div>
<span class="t" style="left:321.50px;top:335.32px">06</span>
<span class="t z" style="left:421.10px;top:335.32px">工作餐</span>
<span class="t" style="left:548.00px;top:335.32px">gzc</span>
<span class="t z" style="left:647.10px;top:335.32px">工作餐</span>
<span class="t z" style="left:746.60px;top:335.32px">工作餐</span>
<span class="t" style="left:873.50px;top:335.32px">0213</span>
<div class="cb" style="left:1009.15px;top:335.52px"></div>
<div class="cb" style="left:1109.40px;top:335.52px"><svg width="14" height="14" viewBox="0 0 14 14"><path d="M2.7 6.6 L5.6 10.8 L10.8 3.2" fill="none" stroke="#666" stroke-width="1.5" stroke-linejoin="round"/></svg></div>
<div class="cb" style="left:1209.45px;top:335.52px"><svg width="14" height="14" viewBox="0 0 14 14"><path d="M2.7 6.6 L5.6 10.8 L10.8 3.2" fill="none" stroke="#666" stroke-width="1.5" stroke-linejoin="round"/></svg></div>
<div class="cb" style="left:1309.80px;top:335.52px"><svg width="14" height="14" viewBox="0 0 14 14"><path d="M2.7 6.6 L5.6 10.8 L10.8 3.2" fill="none" stroke="#666" stroke-width="1.5" stroke-linejoin="round"/></svg></div>
<div class="row" style="top:352.81px;height:23.39px;background:#f6f6f6"></div>
<span class="t" style="left:321.50px;top:358.71px">07</span>
<span class="t z" style="left:421.10px;top:358.71px">银行卡</span>
<span class="t" style="left:548.00px;top:358.71px">yxk</span>
<span class="t z" style="left:647.10px;top:358.71px">现金</span>
<span class="t z" style="left:746.60px;top:358.71px">银行卡</span>
<span class="t" style="left:873.50px;top:358.71px">0211</span>
<div class="cb" style="left:1009.15px;top:358.91px"><svg width="14" height="14" viewBox="0 0 14 14"><path d="M2.7 6.6 L5.6 10.8 L10.8 3.2" fill="none" stroke="#666" stroke-width="1.5" stroke-linejoin="round"/></svg></div>
<div class="cb" style="left:1109.40px;top:358.91px"><svg width="14" height="14" viewBox="0 0 14 14"><path d="M2.7 6.6 L5.6 10.8 L10.8 3.2" fill="none" stroke="#666" stroke-width="1.5" stroke-linejoin="round"/></svg></div>
<div class="cb" style="left:1209.45px;top:358.91px"></div>
<div class="cb" style="left:1309.80px;top:358.91px"><svg width="14" height="14" viewBox="0 0 14 14"><path d="M2.7 6.6 L5.6 10.8 L10.8 3.2" fill="none" stroke="#666" stroke-width="1.5" stroke-linejoin="round"/></svg></div>
<div class="row" style="top:376.20px;height:23.39px;background:#fff"></div>
<span class="t" style="left:321.50px;top:382.10px">022</span>
<span class="t z" style="left:421.10px;top:382.10px">支付宝</span>
<span class="t" style="left:548.00px;top:382.10px">zfb</span>
<span class="t z" style="left:647.10px;top:382.10px">现金</span>
<span class="t z" style="left:746.60px;top:382.10px">电子支付</span>
<span class="t" style="left:873.50px;top:382.10px">0203</span>
<div class="cb" style="left:1009.15px;top:382.30px"><svg width="14" height="14" viewBox="0 0 14 14"><path d="M2.7 6.6 L5.6 10.8 L10.8 3.2" fill="none" stroke="#666" stroke-width="1.5" stroke-linejoin="round"/></svg></div>
<div class="cb" style="left:1109.40px;top:382.30px"><svg width="14" height="14" viewBox="0 0 14 14"><path d="M2.7 6.6 L5.6 10.8 L10.8 3.2" fill="none" stroke="#666" stroke-width="1.5" stroke-linejoin="round"/></svg></div>
<div class="cb" style="left:1209.45px;top:382.30px"></div>
<div class="cb" style="left:1309.80px;top:382.30px"><svg width="14" height="14" viewBox="0 0 14 14"><path d="M2.7 6.6 L5.6 10.8 L10.8 3.2" fill="none" stroke="#666" stroke-width="1.5" stroke-linejoin="round"/></svg></div>
<div class="row" style="top:399.59px;height:23.39px;background:#f6f6f6"></div>
<span class="t" style="left:321.50px;top:405.49px">08</span>
<span class="t z" style="left:421.10px;top:405.49px">代金券</span>
<span class="t" style="left:548.00px;top:405.49px">djq</span>
<span class="t z" style="left:647.10px;top:405.49px">现金</span>
<span class="t z" style="left:746.60px;top:405.49px">代金券</span>
<span class="t" style="left:873.50px;top:405.49px">0205</span>
<div class="cb" style="left:1009.15px;top:405.69px"></div>
<div class="cb" style="left:1109.40px;top:405.69px"><svg width="14" height="14" viewBox="0 0 14 14"><path d="M2.7 6.6 L5.6 10.8 L10.8 3.2" fill="none" stroke="#666" stroke-width="1.5" stroke-linejoin="round"/></svg></div>
<div class="cb" style="left:1209.45px;top:405.69px"><svg width="14" height="14" viewBox="0 0 14 14"><path d="M2.7 6.6 L5.6 10.8 L10.8 3.2" fill="none" stroke="#666" stroke-width="1.5" stroke-linejoin="round"/></svg></div>
<div class="cb" style="left:1309.80px;top:405.69px"><svg width="14" height="14" viewBox="0 0 14 14"><path d="M2.7 6.6 L5.6 10.8 L10.8 3.2" fill="none" stroke="#666" stroke-width="1.5" stroke-linejoin="round"/></svg></div>
<div class="row" style="top:422.98px;height:23.39px;background:#fff"></div>
<span class="t" style="letter-spacing:-0.75px;left:321.50px;top:428.88px">YEZCDF</span>
<span class="t z" style="left:421.10px;top:428.88px">余额转出</span>
<span class="t" style="left:548.00px;top:428.88px">yezc</span>
<span class="t z" style="left:647.10px;top:428.88px">餐饮转帐</span>
<span class="t z" style="left:746.60px;top:428.88px">一点结算</span>
<span class="t" style="left:873.50px;top:428.88px">0299</span>
<div class="cb" style="left:1009.15px;top:429.08px"></div>
<div class="cb" style="left:1109.40px;top:429.08px"><svg width="14" height="14" viewBox="0 0 14 14"><path d="M2.7 6.6 L5.6 10.8 L10.8 3.2" fill="none" stroke="#666" stroke-width="1.5" stroke-linejoin="round"/></svg></div>
<div class="cb" style="left:1209.45px;top:429.08px"></div>
<div class="cb" style="left:1309.80px;top:429.08px"><svg width="14" height="14" viewBox="0 0 14 14"><path d="M2.7 6.6 L5.6 10.8 L10.8 3.2" fill="none" stroke="#666" stroke-width="1.5" stroke-linejoin="round"/></svg></div>
<div class="row" style="top:446.37px;height:23.39px;background:#f6f6f6"></div>
<span class="t" style="letter-spacing:-0.75px;left:321.50px;top:452.27px">YEZRDF</span>
<span class="t z" style="left:421.10px;top:452.27px">余额转入</span>
<span class="t" style="left:548.00px;top:452.27px">yezr</span>
<span class="t z" style="left:647.10px;top:452.27px">餐饮转帐</span>
<span class="t z" style="left:746.60px;top:452.27px">一点结算</span>
<span class="t" style="left:873.50px;top:452.27px">0299</span>
<div class="cb" style="left:1009.15px;top:452.47px"></div>
<div class="cb" style="left:1109.40px;top:452.47px"><svg width="14" height="14" viewBox="0 0 14 14"><path d="M2.7 6.6 L5.6 10.8 L10.8 3.2" fill="none" stroke="#666" stroke-width="1.5" stroke-linejoin="round"/></svg></div>
<div class="cb" style="left:1209.45px;top:452.47px"></div>
<div class="cb" style="left:1309.80px;top:452.47px"><svg width="14" height="14" viewBox="0 0 14 14"><path d="M2.7 6.6 L5.6 10.8 L10.8 3.2" fill="none" stroke="#666" stroke-width="1.5" stroke-linejoin="round"/></svg></div>
<div class="row" style="top:469.76px;height:23.39px;background:#fff"></div>
<span class="t" style="left:321.50px;top:475.66px">09</span>
<span class="t z" style="left:421.10px;top:475.66px">定金</span>
<span class="t" style="left:548.00px;top:475.66px">dj</span>
<span class="t z" style="left:647.10px;top:475.66px">信用卡</span>
<span class="t z" style="left:746.60px;top:475.66px">定金</span>
<span class="t" style="left:873.50px;top:475.66px">0210</span>
<div class="cb" style="left:1009.15px;top:475.86px"><svg width="14" height="14" viewBox="0 0 14 14"><path d="M2.7 6.6 L5.6 10.8 L10.8 3.2" fill="none" stroke="#666" stroke-width="1.5" stroke-linejoin="round"/></svg></div>
<div class="cb" style="left:1109.40px;top:475.86px"><svg width="14" height="14" viewBox="0 0 14 14"><path d="M2.7 6.6 L5.6 10.8 L10.8 3.2" fill="none" stroke="#666" stroke-width="1.5" stroke-linejoin="round"/></svg></div>
<div class="cb" style="left:1209.45px;top:475.86px"></div>
<div class="cb" style="left:1309.80px;top:475.86px"><svg width="14" height="14" viewBox="0 0 14 14"><path d="M2.7 6.6 L5.6 10.8 L10.8 3.2" fill="none" stroke="#666" stroke-width="1.5" stroke-linejoin="round"/></svg></div>
<div class="row" style="top:493.15px;height:23.39px;background:#99ccff"></div>
<span class="t" style="left:321.50px;top:499.05px">10</span>
<span class="t z" style="left:421.10px;top:499.05px">票券核销</span>
<span class="t" style="left:548.00px;top:499.05px">pqhx</span>
<span class="t z" style="left:647.10px;top:499.05px">票券</span>
<span class="t z" style="left:746.60px;top:499.05px">票券</span>
<span class="t" style="left:873.50px;top:499.05px">0209</span>
<div class="cb" style="left:1009.15px;top:499.25px"></div>
<div class="cb" style="left:1109.40px;top:499.25px"><svg width="14" height="14" viewBox="0 0 14 14"><path d="M2.7 6.6 L5.6 10.8 L10.8 3.2" fill="none" stroke="#666" stroke-width="1.5" stroke-linejoin="round"/></svg></div>
<div class="cb" style="left:1209.45px;top:499.25px"><svg width="14" height="14" viewBox="0 0 14 14"><path d="M2.7 6.6 L5.6 10.8 L10.8 3.2" fill="none" stroke="#666" stroke-width="1.5" stroke-linejoin="round"/></svg></div>
<div class="cb" style="left:1309.80px;top:499.25px"><svg width="14" height="14" viewBox="0 0 14 14"><path d="M2.7 6.6 L5.6 10.8 L10.8 3.2" fill="none" stroke="#666" stroke-width="1.5" stroke-linejoin="round"/></svg></div>
<div class="row" style="top:516.54px;height:23.39px;background:#fff"></div>
<span class="t" style="left:321.50px;top:522.44px">0901</span>
<span class="t z" style="left:421.10px;top:522.44px">定金抵扣</span>
<span class="t" style="left:548.00px;top:522.44px">djdk</span>
<span class="t z" style="left:647.10px;top:522.44px">订金抵扣</span>
<span class="t z" style="left:746.60px;top:522.44px">定金</span>
<span class="t" style="left:873.50px;top:522.44px">0210</span>
<div class="cb" style="left:1009.15px;top:522.64px"><svg width="14" height="14" viewBox="0 0 14 14"><path d="M2.7 6.6 L5.6 10.8 L10.8 3.2" fill="none" stroke="#666" stroke-width="1.5" stroke-linejoin="round"/></svg></div>
<div class="cb" style="left:1109.40px;top:522.64px"><svg width="14" height="14" viewBox="0 0 14 14"><path d="M2.7 6.6 L5.6 10.8 L10.8 3.2" fill="none" stroke="#666" stroke-width="1.5" stroke-linejoin="round"/></svg></div>
<div class="cb" style="left:1209.45px;top:522.64px"></div>
<div class="cb" style="left:1309.80px;top:522.64px"><svg width="14" height="14" viewBox="0 0 14 14"><path d="M2.7 6.6 L5.6 10.8 L10.8 3.2" fill="none" stroke="#666" stroke-width="1.5" stroke-linejoin="round"/></svg></div>
<div class="row" style="top:539.93px;height:23.39px;background:#f6f6f6"></div>
<span class="t" style="left:321.50px;top:545.83px">11</span>
<span class="t" style="left:421.50px;top:545.83px">POS机</span>
<span class="t" style="left:547.00px;top:545.83px">POSj</span>
<span class="t z" style="left:647.10px;top:545.83px">现金</span>
<span class="t" style="left:747.00px;top:545.83px">POS机</span>
<span class="t" style="left:873.50px;top:545.83px">0211</span>
<div class="cb" style="left:1009.15px;top:546.03px"><svg width="14" height="14" viewBox="0 0 14 14"><path d="M2.7 6.6 L5.6 10.8 L10.8 3.2" fill="none" stroke="#666" stroke-width="1.5" stroke-linejoin="round"/></svg></div>
<div class="cb" style="left:1109.40px;top:546.03px"><svg width="14" height="14" viewBox="0 0 14 14"><path d="M2.7 6.6 L5.6 10.8 L10.8 3.2" fill="none" stroke="#666" stroke-width="1.5" stroke-linejoin="round"/></svg></div>
<div class="cb" style="left:1209.45px;top:546.03px"></div>
<div class="cb" style="left:1309.80px;top:546.03px"><svg width="14" height="14" viewBox="0 0 14 14"><path d="M2.7 6.6 L5.6 10.8 L10.8 3.2" fill="none" stroke="#666" stroke-width="1.5" stroke-linejoin="round"/></svg></div>
<div class="row" style="top:563.32px;height:23.39px;background:#fff"></div>
<span class="t" style="left:321.50px;top:569.22px">12</span>
<span class="t z" style="left:421.10px;top:569.22px">银行转账</span>
<span class="t" style="left:548.00px;top:569.22px">yxzz</span>
<span class="t z" style="left:647.10px;top:569.22px">信用卡</span>
<span class="t z" style="left:746.60px;top:569.22px">银行转账</span>
<span class="t" style="left:873.50px;top:569.22px">0214</span>
<div class="cb" style="left:1009.15px;top:569.42px"><svg width="14" height="14" viewBox="0 0 14 14"><path d="M2.7 6.6 L5.6 10.8 L10.8 3.2" fill="none" stroke="#666" stroke-width="1.5" stroke-linejoin="round"/></svg></div>
<div class="cb" style="left:1109.40px;top:569.42px"><svg width="14" height="14" viewBox="0 0 14 14"><path d="M2.7 6.6 L5.6 10.8 L10.8 3.2" fill="none" stroke="#666" stroke-width="1.5" stroke-linejoin="round"/></svg></div>
<div class="cb" style="left:1209.45px;top:569.42px"></div>
<div class="cb" style="left:1309.80px;top:569.42px"><svg width="14" height="14" viewBox="0 0 14 14"><path d="M2.7 6.6 L5.6 10.8 L10.8 3.2" fill="none" stroke="#666" stroke-width="1.5" stroke-linejoin="round"/></svg></div>
<div class="row" style="top:586.71px;height:23.39px;background:#f6f6f6"></div>
<span class="t" style="left:321.50px;top:592.61px">13</span>
<span class="t z" style="left:421.10px;top:592.61px">凤翠礼卡</span>
<span class="t" style="left:548.00px;top:592.61px">fclk</span>
<span class="t z" style="left:647.10px;top:592.61px">现金</span>
<span class="t z" style="left:746.60px;top:592.61px">凤翠礼卡</span>
<span class="t" style="left:873.50px;top:592.61px">0215</span>
<div class="cb" style="left:1009.15px;top:592.81px"><svg width="14" height="14" viewBox="0 0 14 14"><path d="M2.7 6.6 L5.6 10.8 L10.8 3.2" fill="none" stroke="#666" stroke-width="1.5" stroke-linejoin="round"/></svg></div>
<div class="cb" style="left:1109.40px;top:592.81px"><svg width="14" height="14" viewBox="0 0 14 14"><path d="M2.7 6.6 L5.6 10.8 L10.8 3.2" fill="none" stroke="#666" stroke-width="1.5" stroke-linejoin="round"/></svg></div>
<div class="cb" style="left:1209.45px;top:592.81px"><svg width="14" height="14" viewBox="0 0 14 14"><path d="M2.7 6.6 L5.6 10.8 L10.8 3.2" fill="none" stroke="#666" stroke-width="1.5" stroke-linejoin="round"/></svg></div>
<div class="cb" style="left:1309.80px;top:592.81px"><svg width="14" height="14" viewBox="0 0 14 14"><path d="M2.7 6.6 L5.6 10.8 L10.8 3.2" fill="none" stroke="#666" stroke-width="1.5" stroke-linejoin="round"/></svg></div>
<div class="row" style="top:610.10px;height:23.39px;background:#fff"></div>
<span class="t" style="left:321.50px;top:616.00px">candao</span>
<span class="t z" style="left:421.10px;top:616.00px">餐道支付</span>
<span class="t" style="left:548.00px;top:616.00px">cdzf</span>
<span class="t z" style="left:647.10px;top:616.00px">营销帐</span>
<div class="cb" style="left:1009.15px;top:616.20px"><svg width="14" height="14" viewBox="0 0 14 14"><path d="M2.7 6.6 L5.6 10.8 L10.8 3.2" fill="none" stroke="#666" stroke-width="1.5" stroke-linejoin="round"/></svg></div>
<div class="cb" style="left:1109.40px;top:616.20px"><svg width="14" height="14" viewBox="0 0 14 14"><path d="M2.7 6.6 L5.6 10.8 L10.8 3.2" fill="none" stroke="#666" stroke-width="1.5" stroke-linejoin="round"/></svg></div>
<div class="cb" style="left:1209.45px;top:616.20px"></div>
<div class="cb" style="left:1309.80px;top:616.20px"><svg width="14" height="14" viewBox="0 0 14 14"><path d="M2.7 6.6 L5.6 10.8 L10.8 3.2" fill="none" stroke="#666" stroke-width="1.5" stroke-linejoin="round"/></svg></div>
<div class="row" style="top:633.49px;height:23.39px;background:#f6f6f6"></div>
<span class="t" style="left:321.50px;top:639.39px">canpz</span>
<span class="t z" style="left:421.10px;top:639.39px">餐道平帐</span>
<span class="t" style="left:548.00px;top:639.39px">cdpz</span>
<span class="t z" style="left:647.10px;top:639.39px">营销帐</span>
<div class="cb" style="left:1009.15px;top:639.59px"></div>
<div class="cb" style="left:1109.40px;top:639.59px"><svg width="14" height="14" viewBox="0 0 14 14"><path d="M2.7 6.6 L5.6 10.8 L10.8 3.2" fill="none" stroke="#666" stroke-width="1.5" stroke-linejoin="round"/></svg></div>
<div class="cb" style="left:1209.45px;top:639.59px"><svg width="14" height="14" viewBox="0 0 14 14"><path d="M2.7 6.6 L5.6 10.8 L10.8 3.2" fill="none" stroke="#666" stroke-width="1.5" stroke-linejoin="round"/></svg></div>
<div class="cb" style="left:1309.80px;top:639.59px"><svg width="14" height="14" viewBox="0 0 14 14"><path d="M2.7 6.6 L5.6 10.8 L10.8 3.2" fill="none" stroke="#666" stroke-width="1.5" stroke-linejoin="round"/></svg></div>
<div class="row" style="top:656.88px;height:23.39px;background:#fff"></div>
<span class="t" style="left:321.50px;top:662.78px">14</span>
<span class="t z" style="left:421.10px;top:662.78px">悦喜代加工-酒店</span>
<span class="t" style="left:548.00px;top:662.78px">yxdjgjd</span>
<span class="t z" style="left:647.10px;top:662.78px">宴请</span>
<span class="t z" style="left:746.60px;top:662.78px">悦喜代加工-酒店</span>
<span class="t" style="left:873.50px;top:662.78px">0216</span>
<div class="cb" style="left:1009.15px;top:662.98px"></div>
<div class="cb" style="left:1109.40px;top:662.98px"><svg width="14" height="14" viewBox="0 0 14 14"><path d="M2.7 6.6 L5.6 10.8 L10.8 3.2" fill="none" stroke="#666" stroke-width="1.5" stroke-linejoin="round"/></svg></div>
<div class="cb" style="left:1209.45px;top:662.98px"></div>
<div class="cb" style="left:1309.80px;top:662.98px"><svg width="14" height="14" viewBox="0 0 14 14"><path d="M2.7 6.6 L5.6 10.8 L10.8 3.2" fill="none" stroke="#666" stroke-width="1.5" stroke-linejoin="round"/></svg></div>
<div class="row" style="top:680.27px;height:23.39px;background:#f6f6f6"></div>
<span class="t" style="left:321.50px;top:686.17px">15</span>
<span class="t z" style="left:421.10px;top:686.17px">积分抵消费</span>
<span class="t" style="left:548.00px;top:686.17px">jfdxf</span>
<span class="t z" style="left:647.10px;top:686.17px">积分抵消费</span>
<span class="t z" style="left:746.60px;top:686.17px">积分抵消费</span>
<span class="t" style="left:873.50px;top:686.17px">0299</span>
<div class="cb" style="left:1009.15px;top:686.37px"></div>
<div class="cb" style="left:1109.40px;top:686.37px"><svg width="14" height="14" viewBox="0 0 14 14"><path d="M2.7 6.6 L5.6 10.8 L10.8 3.2" fill="none" stroke="#666" stroke-width="1.5" stroke-linejoin="round"/></svg></div>
<div class="cb" style="left:1209.45px;top:686.37px"><svg width="14" height="14" viewBox="0 0 14 14"><path d="M2.7 6.6 L5.6 10.8 L10.8 3.2" fill="none" stroke="#666" stroke-width="1.5" stroke-linejoin="round"/></svg></div>
<div class="cb" style="left:1309.80px;top:686.37px"><svg width="14" height="14" viewBox="0 0 14 14"><path d="M2.7 6.6 L5.6 10.8 L10.8 3.2" fill="none" stroke="#666" stroke-width="1.5" stroke-linejoin="round"/></svg></div>
<div class="row" style="top:703.66px;height:23.39px;background:#fff"></div>
<span class="t" style="left:321.50px;top:709.56px">0301</span>
<span class="t z" style="left:421.10px;top:709.56px">挂美团应收</span>
<span class="t" style="left:548.00px;top:709.56px">gmtys</span>
<span class="t z" style="left:647.10px;top:709.56px">应收帐</span>
<span class="t" style="left:873.50px;top:709.56px">0204</span>
<div class="cb" style="left:1009.15px;top:709.76px"><svg width="14" height="14" viewBox="0 0 14 14"><path d="M2.7 6.6 L5.6 10.8 L10.8 3.2" fill="none" stroke="#666" stroke-width="1.5" stroke-linejoin="round"/></svg></div>
<div class="cb" style="left:1109.40px;top:709.76px"><svg width="14" height="14" viewBox="0 0 14 14"><path d="M2.7 6.6 L5.6 10.8 L10.8 3.2" fill="none" stroke="#666" stroke-width="1.5" stroke-linejoin="round"/></svg></div>
<div class="cb" style="left:1209.45px;top:709.76px"></div>
<div class="cb" style="left:1309.80px;top:709.76px"><svg width="14" height="14" viewBox="0 0 14 14"><path d="M2.7 6.6 L5.6 10.8 L10.8 3.2" fill="none" stroke="#666" stroke-width="1.5" stroke-linejoin="round"/></svg></div>
<div class="row" style="top:727.05px;height:23.39px;background:#f6f6f6"></div>
<span class="t" style="left:321.50px;top:732.95px">0302</span>
<span class="t z" style="left:421.10px;top:732.95px">挂直客通应收</span>
<span class="t" style="left:548.00px;top:732.95px">gzktys</span>
<span class="t z" style="left:647.10px;top:732.95px">应收帐</span>
<span class="t" style="left:873.50px;top:732.95px">0204</span>
<div class="cb" style="left:1009.15px;top:733.15px"><svg width="14" height="14" viewBox="0 0 14 14"><path d="M2.7 6.6 L5.6 10.8 L10.8 3.2" fill="none" stroke="#666" stroke-width="1.5" stroke-linejoin="round"/></svg></div>
<div class="cb" style="left:1109.40px;top:733.15px"><svg width="14" height="14" viewBox="0 0 14 14"><path d="M2.7 6.6 L5.6 10.8 L10.8 3.2" fill="none" stroke="#666" stroke-width="1.5" stroke-linejoin="round"/></svg></div>
<div class="cb" style="left:1209.45px;top:733.15px"></div>
<div class="cb" style="left:1309.80px;top:733.15px"><svg width="14" height="14" viewBox="0 0 14 14"><path d="M2.7 6.6 L5.6 10.8 L10.8 3.2" fill="none" stroke="#666" stroke-width="1.5" stroke-linejoin="round"/></svg></div>
<div class="row" style="top:750.44px;height:23.39px;background:#fff"></div>
<span class="t" style="left:321.50px;top:756.34px">0303</span>
<span class="t z" style="left:421.10px;top:756.34px">挂抖音应收</span>
<span class="t" style="left:548.00px;top:756.34px">gdyys</span>
<span class="t z" style="left:647.10px;top:756.34px">应收帐</span>
<span class="t" style="left:873.50px;top:756.34px">0204</span>
<div class="cb" style="left:1009.15px;top:756.54px"><svg width="14" height="14" viewBox="0 0 14 14"><path d="M2.7 6.6 L5.6 10.8 L10.8 3.2" fill="none" stroke="#666" stroke-width="1.5" stroke-linejoin="round"/></svg></div>
<div class="cb" style="left:1109.40px;top:756.54px"><svg width="14" height="14" viewBox="0 0 14 14"><path d="M2.7 6.6 L5.6 10.8 L10.8 3.2" fill="none" stroke="#666" stroke-width="1.5" stroke-linejoin="round"/></svg></div>
<div class="cb" style="left:1209.45px;top:756.54px"></div>
<div class="cb" style="left:1309.80px;top:756.54px"><svg width="14" height="14" viewBox="0 0 14 14"><path d="M2.7 6.6 L5.6 10.8 L10.8 3.2" fill="none" stroke="#666" stroke-width="1.5" stroke-linejoin="round"/></svg></div>
<div class="row" style="top:773.83px;height:23.39px;background:#f6f6f6"></div>
<div class="row" style="top:797.22px;height:23.39px;background:#fff"></div>
<div class="abs" style="left:316.5px;top:141.6px;width:1082.3px;height:1px;background:#d4d4d4"></div>
<div class="hd" style="left:316px;top:125.7px;width:101px">支付代码</div>
<div class="vsep" style="left:416.5px"></div>
<div class="hd" style="left:417px;top:125.7px;width:125.5px">支付名称</div>
<div class="vsep" style="left:542.0px"></div>
<div class="hd" style="left:542.5px;top:125.7px;width:100.5px">助记码</div>
<div class="vsep" style="left:642.5px"></div>
<div class="hd" style="left:643px;top:125.7px;width:99.5px">结算类别</div>
<div class="vsep" style="left:742.0px"></div>
<div class="hd" style="left:742.5px;top:125.7px;width:125.5px">财务科目</div>
<div class="vsep" style="left:867.5px"></div>
<div class="hd" style="left:868px;top:125.7px;width:100px">会员项目</div>
<div class="vsep" style="left:967.5px"></div>
<div class="hd" style="left:968px;top:125.7px;width:100.5px">计算收入</div>
<div class="vsep" style="left:1068.0px"></div>
<div class="hd" style="left:1068.5px;top:125.7px;width:100.0px">允许混合结算</div>
<div class="vsep" style="left:1168.0px"></div>
<div class="hd" style="left:1168.5px;top:125.7px;width:100.09999999999991px">不可开具发票</div>
<div class="vsep" style="left:1268.1px"></div>
<div class="hd" style="left:1268.6px;top:125.7px;width:100.60000000000014px">电子签名</div>
<div class="vsep" style="left:1368.7px"></div>
<div class="vsep" style="left:1387.7px"></div>
<div class="abs" style="left:1388.2px;top:123px;width:10.6px;height:18.6px;background:linear-gradient(#f2f2f2,#dcdcdc)"></div>
<svg class="abs" style="left:1390.5px;top:128.5px" width="7" height="7" viewBox="0 0 7 7"><path d="M3.5 0.3 V6.6 M0.4 3.6 H6.6" stroke="#555" stroke-width="1.7"/></svg>
<div class="abs" style="left:1401.2px;top:67px;width:141px;height:742px;background:#ccd9e6"></div>
<div class="abs" style="left:1404.2px;top:86.7px;width:138px;height:39px;background:#084a90"></div>
<span class="t" style="left:1458px;top:100.5px;font-size:13.8px;color:#fff;line-height:16px">支付方式</span>
<div class="abs" style="left:1404.2px;top:125.7px;width:138px;height:82.7px;background:#fff"></div>
<div class="abs" style="left:1415.2px;top:129px;width:61.5px;height:32.5px;border:2px solid #ff2a1a;border-radius:3.5px"></div>
<svg class="abs" style="left:1417px;top:137.5px" width="13" height="13"><rect x="1.2" y="1.2" width="10.6" height="10.6" rx="1.3" fill="none" stroke="#a9b4cb" stroke-width="1"/><path d="M6.5 4 V9 M4 6.5 H9" stroke="#8794b0" stroke-width="1"/></svg>
<span class="t" style="left:1431.5px;top:137.9px">新增(A)</span>
<svg class="abs" style="left:1417px;top:162px" width="13" height="13"><path d="M6 1.3 H2.5 Q1.3 1.3 1.3 2.5 V10 Q1.3 11.2 2.5 11.2 H10 Q11.2 11.2 11.2 10 V6.5" fill="none" stroke="#b0bad0" stroke-width="1"/><path d="M3.8 9 L4.3 7 L10 1.4 L11.6 3 L6 8.6 Z" fill="none" stroke="#a0abc4" stroke-width="1"/></svg>
<span class="t" style="left:1431.5px;top:161.3px">修改(E)</span>
<svg class="abs" style="left:1417px;top:185px" width="12" height="12"><path d="M4.3 1.5 H7.7 M1.5 2.8 H10.5" stroke="#a9b5cc" stroke-width="1.2"/><path d="M2.4 4 H9.6 L9 10.2 Q8.9 10.8 8.3 10.8 H3.7 Q3.1 10.8 3 10.2 Z" fill="#a9b5cc"/><path d="M4.6 5.3 V9.5 M7.4 5.3 V9.5" stroke="#d5dbe6" stroke-width="0.7"/></svg>
<span class="t" style="left:1431.5px;top:184.3px">删除(D)</span>
<div class="abs" style="left:1280px;top:716.4px;width:171px;height:21.2px;background:#fff;border:1px solid #c7d5e8;border-radius:1px"></div>
<svg class="abs" style="left:1258px;top:708px" width="36" height="34" viewBox="0 0 36 34"><defs><linearGradient id="og" x1="0" y1="0" x2="0.4" y2="1"><stop offset="0" stop-color="#f6763e"/><stop offset="1" stop-color="#ea4a0c"/></linearGradient></defs><g transform="rotate(-15 17.8 17.8)"><rect x="7.2" y="7" width="21" height="21.5" rx="2.8" fill="url(#og)"/></g><path d="M23.3 11.5 Q17 11 11.5 13.6 Q7.5 16 10 18.5 Q12 19.6 18 19.2 Q21.5 19.3 19 21.5 Q15 23.5 10.5 24" fill="none" stroke="#fff" stroke-width="2.4" stroke-linecap="round"/></svg>
<svg class="abs" style="left:1290px;top:718px" width="162" height="18" viewBox="0 0 162 18"><rect x="5.3" y="5.5" width="11" height="7" rx="1.3" fill="none" stroke="#0a6fd8" stroke-width="2"/><path d="M10.8 3 V14.7" stroke="#0a6fd8" stroke-width="2"/><circle cx="28.3" cy="7" r="1.5" fill="#0a6fd8"/><path d="M33 9.2 Q33.6 11.8 31.5 13" fill="none" stroke="#0a6fd8" stroke-width="1.6" stroke-linecap="round"/><rect x="48.2" y="2.3" width="4" height="8.7" rx="2" fill="#0a6fd8"/><path d="M45.6 8 Q45.6 12.3 50.2 12.3 Q54.8 12.3 54.8 8" fill="none" stroke="#3f8ee3" stroke-width="1.1"/><path d="M50.2 14 V15" stroke="#0a6fd8" stroke-width="1.2"/><rect x="65" y="4.5" width="12" height="9" rx="1.3" fill="none" stroke="#0a6fd8" stroke-width="1.4"/><path d="M67 7 H75 M67 9.4 H75 M67.5 11.6 H74.5" stroke="#0a6fd8" stroke-width="1" stroke-dasharray="1.2 0.6"/><defs><linearGradient id="sg" x1="0" y1="0" x2="1" y2="1"><stop offset="0" stop-color="#f0604c"/><stop offset="0.55" stop-color="#9d7bfa"/><stop offset="1" stop-color="#7ad8ff"/></linearGradient></defs><path d="M84.3 4.5 Q85.5 3.4 86.5 4.3 Q88.3 5.4 90.5 4.2 Q92 3.5 93.3 5 L94 7 L92.5 7.3 V13.5 Q92.5 14.8 91.2 14.8 H87.3 Q86 14.8 86 13.5 V7.3 L84.2 7 Z" fill="url(#sg)"/><circle cx="96.7" cy="2.1" r="2.5" fill="#f4522a"/><rect x="103.6" y="4.5" width="14" height="10" rx="5" fill="#0a6fd8"/><path d="M110.6 2 V4.6" stroke="#0a6fd8" stroke-width="1.2"/><path d="M106.5 9.7 H108.5" stroke="#cfe3fa" stroke-width="1.2"/><circle cx="112.8" cy="9.6" r="1.3" fill="none" stroke="#cfe3fa" stroke-width="0.8"/><rect x="125" y="3.7" width="5" height="5" rx="1.6" fill="#0a6fd8"/><rect x="131" y="3.7" width="5" height="5" rx="1.6" fill="#0a6fd8"/><rect x="125" y="9.7" width="5" height="5" rx="1.6" fill="#0a6fd8"/><rect x="131" y="9.7" width="5" height="5" rx="1.6" fill="#0a6fd8"/><circle cx="133.5" cy="6.2" r="0.8" fill="#fff"/><path d="M150.8 2.6 L156.6 12.4 H145 Z" fill="#0a6fd8"/><path d="M150.8 15.2 L156.6 5.4 H145 Z" fill="#0a6fd8"/><circle cx="150.8" cy="8.2" r="1.7" fill="#fff"/><path d="M150.8 9 V12.2" stroke="#fff" stroke-width="1.3"/></svg>
<div class="abs" style="left:524.8px;top:797.5px;width:498px;height:30px;background:#4b4b4b;border-radius:6px"></div>
</body></html>
